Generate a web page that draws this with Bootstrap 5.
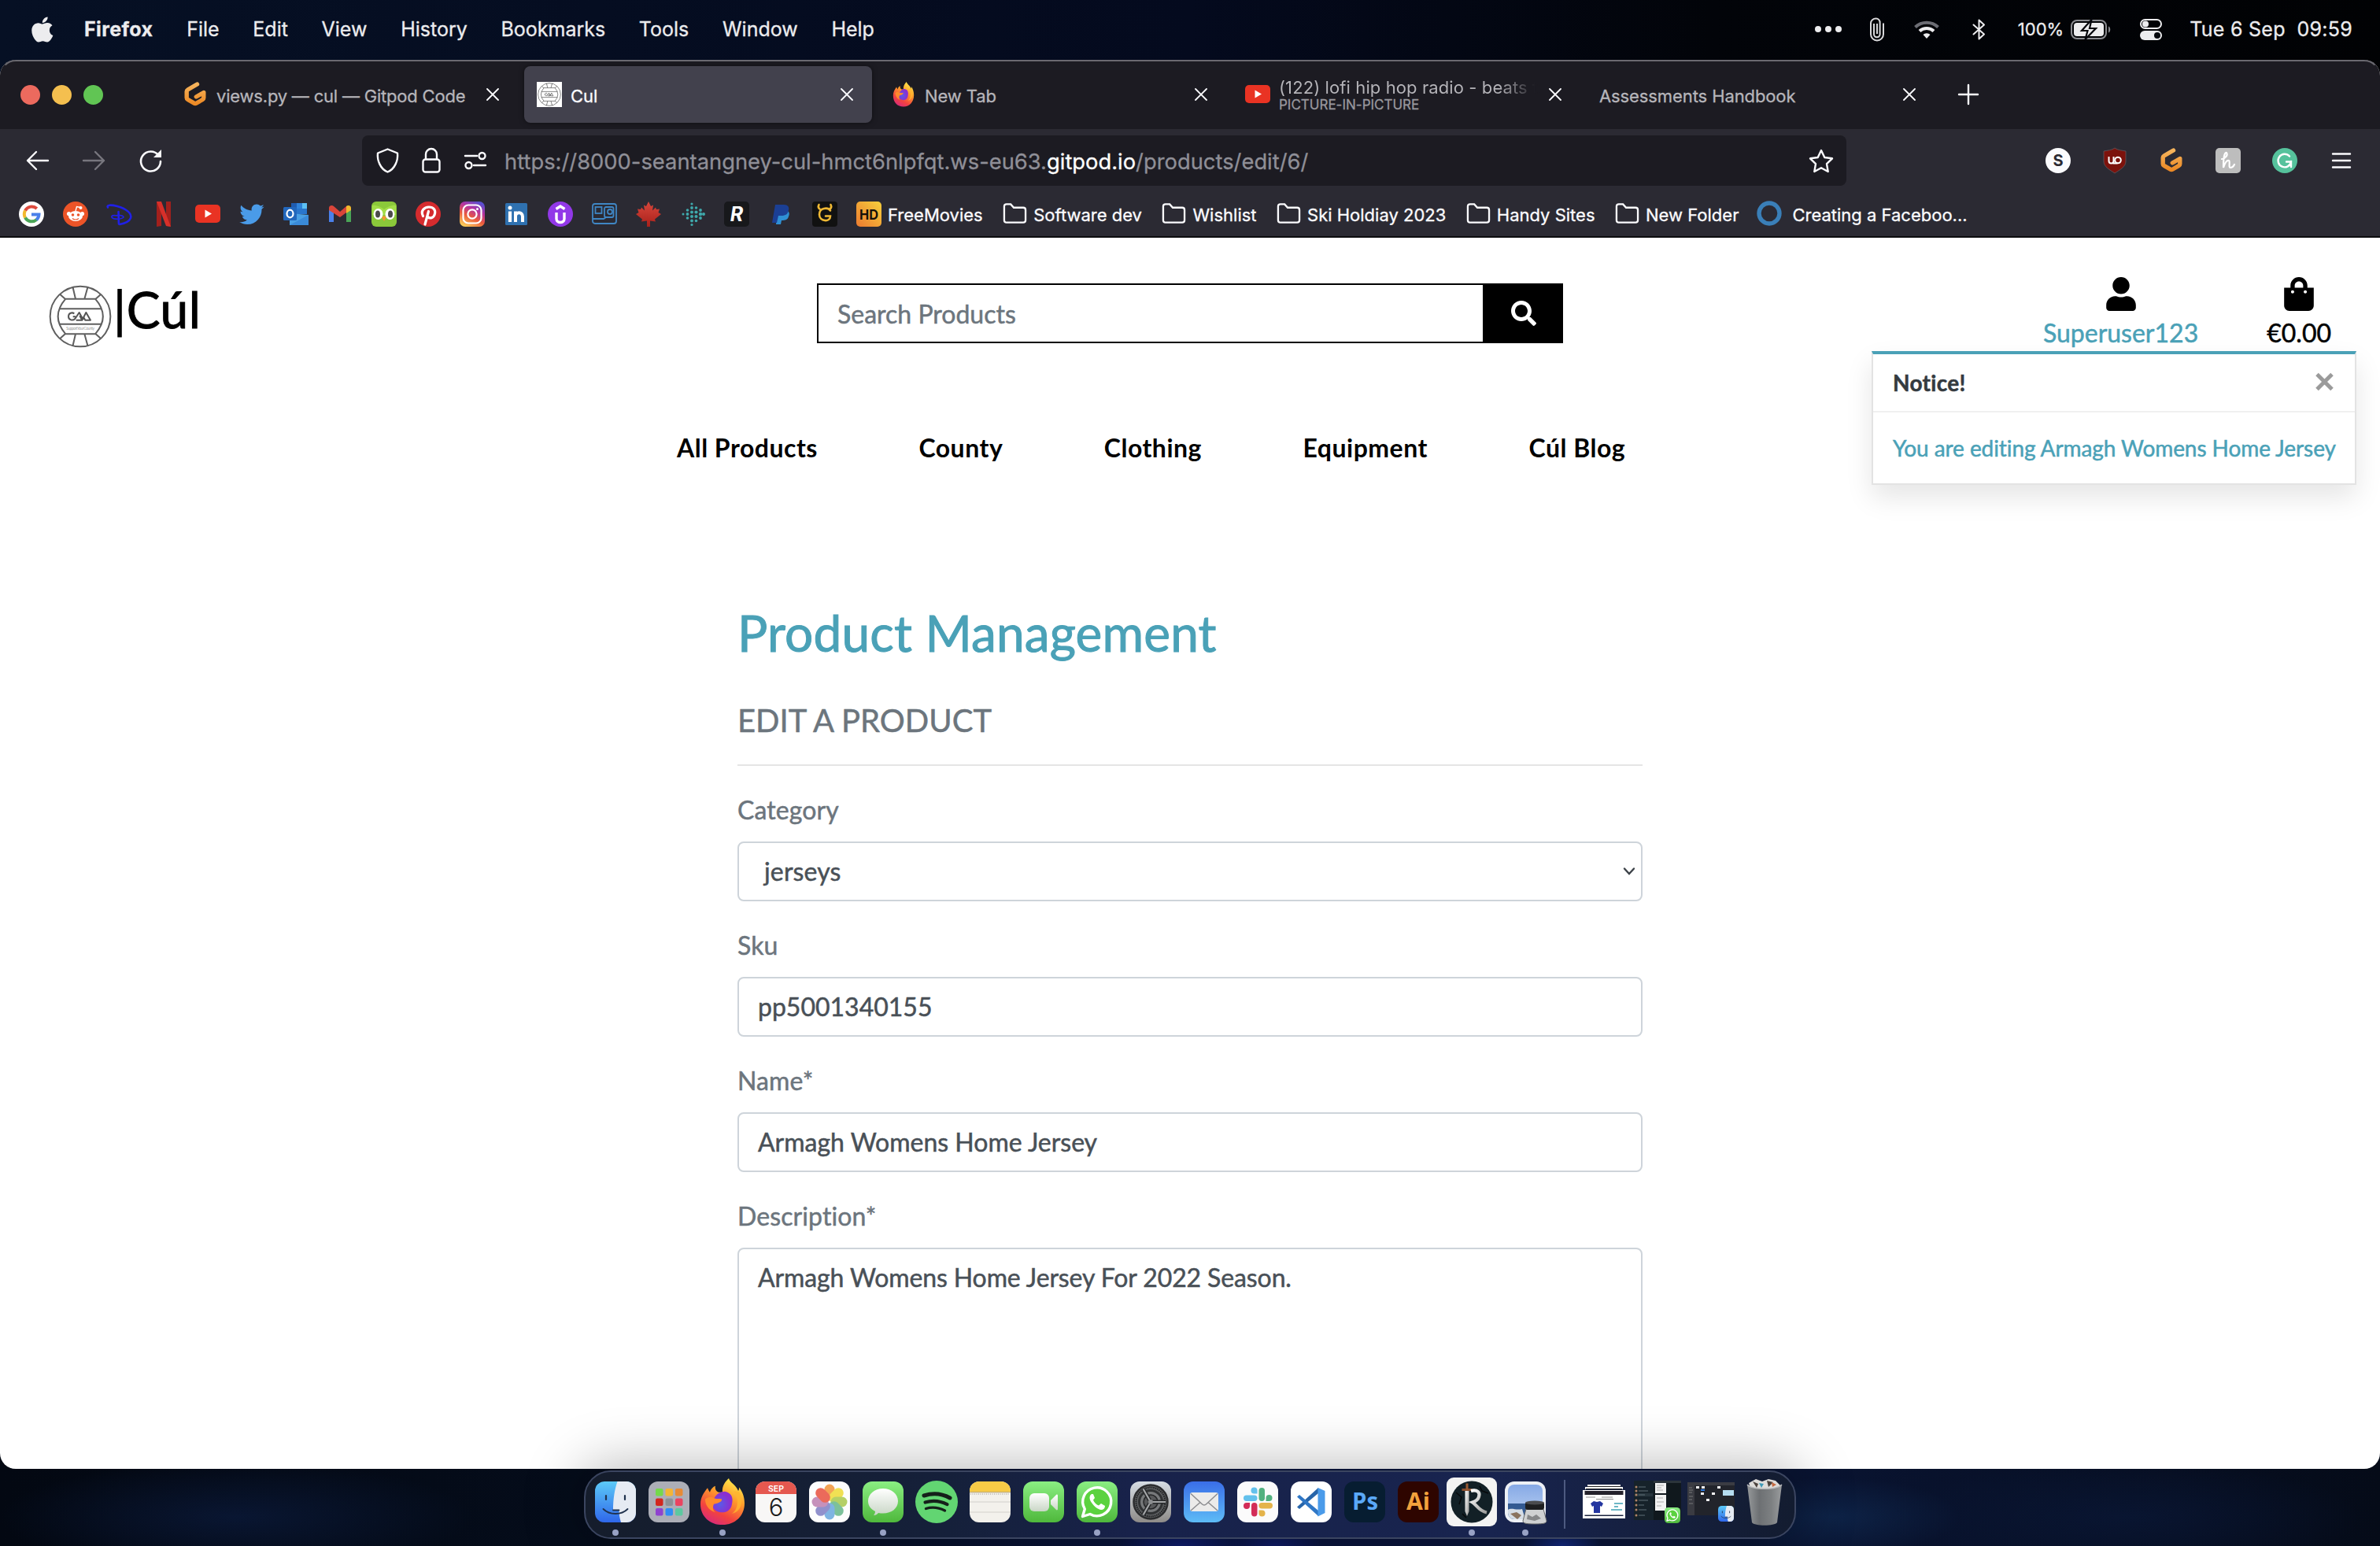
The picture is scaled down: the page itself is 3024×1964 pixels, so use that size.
<!DOCTYPE html>
<html lang="en">
<head>
<meta charset="utf-8">
<title>Cul</title>
<link href="https://cdn.jsdelivr.net/npm/bootstrap@5.3.0/dist/css/bootstrap.min.css" rel="stylesheet">
<style>
html{font-size:32px}
body{width:3024px;height:1964px;overflow:hidden;background:linear-gradient(90deg,#061024,#040a1e 50%,#020409 72%,#010204);font-family:Lato,sans-serif;font-size:32px;line-height:1.5;color:#495057;font-variant-ligatures:none}
svg{display:block;flex:none;overflow:visible}
.ui{font-family:Inter,sans-serif;line-height:1;white-space:nowrap;-webkit-text-stroke:.3px}
.page-text{-webkit-text-stroke:.5px}
/* menu bar */
.menubar{height:76px;padding:0 35px 2px 40px;color:#ececee;font-size:25px}
.menubar .apps{gap:42.700px;margin-left:40px}
.menubar .apps .fw-bold{letter-spacing:.4px}
.menubar .pct{font-size:22px;margin:0 9px 0 41px}
.menubar .clock{margin-left:35px;letter-spacing:.28px}
.g1{margin-left:35px}.g2{margin-left:37px}.g3{margin-left:42px}.g4{margin-left:36px}
/* browser window */
.win{height:1790px;border-radius:20px;overflow:hidden;background:#fff;position:relative;isolation:isolate}
.win::after{content:"";position:absolute;inset:0;border:2px solid transparent;border-top-color:#6a6970;border-radius:20px;pointer-events:none}
.tabs{height:88px;background:#1c1b22;padding:0 0 0 26px;color:#b6b5ba;font-size:22px;letter-spacing:-.1px}
.lights{gap:15px;width:190px;flex:none}
.lights i{width:25px;height:25px;border-radius:50%}
.l-red{background:#ec6a5e}.l-amber{background:#f4bf4f}.l-green{background:#61c554}
.ftab{width:442px;flex:none;height:72px;margin-right:8px;padding:0 24px 0 16px;border-radius:8px;gap:11px}
.ftab.on{background:#42414d;color:#fbfbfe;box-shadow:0 0 6px rgba(0,0,0,.5)}
.ftab .ttl{flex:1;min-width:0;line-height:30px;padding-top:3px}
.ftab .dashed{letter-spacing:-.2px}
.pip .ttl{line-height:23px;padding-top:2px;letter-spacing:.1px}
.pip .fadeout{display:block;background:linear-gradient(90deg,#b6b5ba 84%,#1c1b22 98%);-webkit-background-clip:text;color:transparent;-webkit-text-stroke:0}
.pip .sub{display:block;font-size:17px;line-height:20px;color:#98979d;letter-spacing:0}
.newtab{margin-left:22px}
.tools{height:80px;background:#2b2a33;padding:0 36px 8px 33px;color:#fbfbfe}
.tools .back{width:428px;gap:43px;margin-top:8px}
.url{width:1886px;flex:none;height:64px;background:#1c1b22;border-radius:8px;padding:0 16px 0 18px;font-size:27.350px;color:#8f8f97;margin-top:8px}
.url .addr{margin-left:23px;flex:1;padding-top:3px}
.url .lock{margin-left:29px}
.url .perms{margin-left:30px}
.tools .ext{gap:40px;margin-top:8px;padding-left:253px}
.tools .ext .burger{margin-left:3px}
.marks{height:58px;background:#2b2a33;border-bottom:2px solid #0c0c0e;padding:0 0 0 24px;color:#fbfbfe;font-size:22px}
.marks .ico{gap:24px}
.marks .lone{margin-left:8px;padding-top:2px}
.bmk{display:flex;align-items:center;gap:8px;margin-left:25.500px}
.bmk span{padding-top:2px}
.bmk svg{margin-top:-2px}
.bmk.site{gap:13px;margin-left:23px}
/* shop page */
.pagehead{display:grid;grid-template-columns:1fr 948px 1fr;height:144px;padding:0 62px 0 62px}
.pagehead .lg{padding-top:60px}
.pagehead .srch{padding-top:58px}
.brandtxt{font-size:64px;line-height:64px;color:#000;margin:-1px 0 0 2px;letter-spacing:.6px;-webkit-text-stroke:1px}
.srch .form-control{border:2px solid #000;border-radius:0;height:76px;color:#6c757d;padding-top:13px}
.srch .btn{width:100px;flex:none;border-radius:0;background:#000;height:76px;display:flex;align-items:center;justify-content:center;padding:0;border:0}
.tealtxt{color:#4aa1b7}
.tools-r{gap:87px;padding-top:50px}
.tools-r .lbl{line-height:48px;margin-top:4px}
.mainnav{gap:128.500px;padding:99px 0 0 860px;height:146px;color:#000;font-weight:700;white-space:nowrap;-webkit-text-stroke:0;letter-spacing:.5px}
.notice{position:absolute;left:2378px;top:370px;width:616px;height:170px;background:#fff;border:2px solid #e3e3e3;border-top:4px solid #4aa1b7;box-shadow:0 16px 32px rgba(0,0,0,.1);font-size:28px;z-index:3}
.notice .hd{height:74px;border-bottom:2px solid #f0f0f0;padding:0 26px 0 25px;color:#343a40;font-weight:700;letter-spacing:.3px}
.notice .hd svg{margin-top:-2px}
.notice .bd{padding:24px 0 0 25px;white-space:nowrap;letter-spacing:-.08px}
.pform{width:1150px;margin:174px 0 0 937px}
.pform h2{margin-bottom:48px;font-weight:400;letter-spacing:.12px;-webkit-text-stroke:1px}
.pform h5{margin:0 0 32px;font-weight:400;color:#6c757d}
.pform hr{margin:0 0 32px;border-top:2px solid #e5e5e5;opacity:1}
.pform label{display:block;color:#6c757d;margin-bottom:16px;letter-spacing:.1px}
.pform .form-control{border:2px solid #ced4da;border-radius:8px;height:76px;margin-bottom:32px;color:#495057}
.pform .pick{padding:12px 7px 12px 32px;letter-spacing:.15px}
.pform .ctl-area{height:500px;letter-spacing:-.11px}
/* dock */
.dock{position:absolute;left:742px;top:1868px;width:1540px;height:87px;border:2px solid #3b4560;border-radius:34px;background:linear-gradient(90deg,#151d2c,#15203a 30%,#18224a 45%,#18244f 75%,#131c30);padding:0 4px}
.dockshade{position:absolute;left:742px;top:1868px;width:1540px;height:87px;border-radius:34px;box-shadow:0 0 70px 8px rgba(0,0,0,.27)}
.dock .slot{width:68px;height:83px;display:flex;align-items:center;justify-content:center;position:relative}
.dock .slot svg{margin-top:-7px}
.dock .run::after{content:"";position:absolute;bottom:2px;left:30px;width:8px;height:8px;border-radius:50%;background:#98a2c4}
.dock .sep{width:32px;display:flex;justify-content:center}
.dock .sep i{width:2px;height:62px;background:#4d5a80;margin-top:10px}
.floor{position:absolute;left:0;top:1847px;width:3024px;height:117px;z-index:-1;background:radial-gradient(ellipse 80px 30px at 1500px 117px,#13249a88,transparent),radial-gradient(ellipse 60px 26px at 1620px 117px,#14229a77,transparent),radial-gradient(ellipse 50px 26px at 1985px 117px,#1a3ac088,transparent),radial-gradient(ellipse 160px 50px at 2330px 80px,#12305a88,transparent),radial-gradient(ellipse 300px 70px at 300px 80px,#0c1c40aa,transparent),radial-gradient(ellipse 300px 70px at 2700px 80px,#0a1838aa,transparent),linear-gradient(90deg,#030812,#050d1c 30%,#0a1540 50%,#0a1638 70%,#050b18)}
</style>
</head>
<body class="position-relative">
<svg width="0" height="0" class="position-absolute">
<defs>
<linearGradient id="ff" x1=".8" y1="0" x2=".3" y2="1"><stop offset="0" stop-color="#fff44f"/><stop offset=".4" stop-color="#ff9a2b"/><stop offset=".75" stop-color="#f2433f"/><stop offset="1" stop-color="#d92a7a"/></linearGradient>
<radialGradient id="ffp" cx=".4" cy=".6"><stop offset="0" stop-color="#5a5ae8"/><stop offset="1" stop-color="#8a2fd0"/></radialGradient>
<linearGradient id="gr" x1="0" y1="0" x2="0" y2="1"><stop offset="0" stop-color="#8aee82"/><stop offset="1" stop-color="#4fb83c"/></linearGradient>
<linearGradient id="gp" x1="0" y1="0" x2="0" y2="1"><stop offset="0" stop-color="#f6b45c"/><stop offset="1" stop-color="#ec8a26"/></linearGradient>
<linearGradient id="wg" x1="0" y1="0" x2="0" y2="1"><stop offset="0" stop-color="#fff"/><stop offset="1" stop-color="#c9d6c6"/></linearGradient>
<linearGradient id="ig" x1=".2" y1="1" x2=".7" y2="0"><stop offset="0" stop-color="#fbd35b"/><stop offset=".4" stop-color="#ea5a3c"/><stop offset=".7" stop-color="#b634a0"/><stop offset="1" stop-color="#5a4fd0"/></linearGradient>
<linearGradient id="fb" x1="0" y1="0" x2="0" y2="1"><stop offset="0" stop-color="#5ccaf8"/><stop offset="1" stop-color="#2f67ea"/></linearGradient>
<linearGradient id="ml" x1="0" y1="0" x2="0" y2="1"><stop offset="0" stop-color="#3a6ee8"/><stop offset="1" stop-color="#5ebcf6"/></linearGradient>
<linearGradient id="gs" x1="0" y1="0" x2="0" y2="1"><stop offset="0" stop-color="#d6dde4"/><stop offset="1" stop-color="#8e8b88"/></linearGradient>
<linearGradient id="tr" x1="0" y1="0" x2="1" y2="0"><stop offset="0" stop-color="#96999b"/><stop offset=".35" stop-color="#6d7073"/><stop offset=".7" stop-color="#7d8082"/><stop offset="1" stop-color="#9a9c9e"/></linearGradient>
<linearGradient id="hd" x1="0" y1="1" x2="1" y2="0"><stop offset="0" stop-color="#ec7a30"/><stop offset="1" stop-color="#f6d03c"/></linearGradient>
<linearGradient id="leaf" x1="0" y1="0" x2="0" y2="1"><stop offset="0" stop-color="#d8473c"/><stop offset="1" stop-color="#a8201a"/></linearGradient>
<linearGradient id="steel" x1="0" y1="0" x2="1" y2="1"><stop offset="0" stop-color="#fff"/><stop offset="1" stop-color="#9a9a98"/></linearGradient>
<linearGradient id="sky" x1="0" y1="0" x2="0" y2="1"><stop offset="0" stop-color="#86a9e6"/><stop offset="1" stop-color="#bcd2f2"/></linearGradient>
<symbol id="x" viewBox="0 0 16 16"><path d="M1 1L15 15M15 1L1 15" stroke="#fbfbfe" stroke-width="1.800" stroke-linecap="round"/></symbol>
<symbol id="folder" viewBox="0 0 32 28"><path d="M2 23V5a3 3 0 0 1 3-3h5.500l4 4.500H27a3 3 0 0 1 3 3V23a3 3 0 0 1-3 3H5a3 3 0 0 1-3-3z" fill="none" stroke="#fbfbfe" stroke-width="2.400"/></symbol>
<symbol id="gitpod" viewBox="0 0 32 32"><path d="M18.500 3L6.500 10a2.500 2.500 0 0 0-1.300 2.200v8a2.500 2.500 0 0 0 1.300 2.200l8.200 4.800a2.500 2.500 0 0 0 2.600 0l8.200-4.800a2.500 2.500 0 0 0 1.300-2.200v-6.700l-9.500 5.500" fill="none" stroke="url(#gp)" stroke-width="5.400" stroke-linecap="round" stroke-linejoin="round"/></symbol>
<symbol id="firefox" viewBox="0 0 56 68"><path d="M28 67C12 67 0 55 0 37 0 28 4 21 9 14c1 3 2 5 3 6 1-4 4-8 7-9-1 4 1 8 4 9h5C27 11 32 4 36 0c2 7 9 9 12 18 1-1 1-3 1-5 5 7 7 15 7 23 0 18-12 31-28 31z" fill="url(#ff)"/><path d="M42 19c7 8 7 25-2 32 12-3 15-18 10-30-2-3-5-2-8-2z" fill="#ffb52e" opacity=".8"/><path d="M17 30c3-8 9-11 14-11 8 2 11 8 9 18-1 9-8 13-14 12-8-1-12-8-11-14 4-1 8-1 12-5-4 1-7 1-10 0z" fill="url(#ffp)"/><path d="M6 30c4-4 8-4 12-1 3 1 6 0 9 1 1 3-4 6-10 7-2 6-1 9 2 12-9-3-13-11-13-19z" fill="#ff8a2c"/></symbol>
<symbol id="yt" viewBox="0 0 32 24"><rect width="32" height="23" rx="5" fill="#e93323"/><path d="M12.500 6.500L21 11.500l-8.500 5z" fill="#fff"/></symbol>
<symbol id="ball" viewBox="0 0 240 240"><g fill="none" stroke="#5f5f5f" stroke-width="6"><circle cx="120" cy="120" r="115"/><path d="M64 53H177M64 187H177M64 53Q6 120 64 187M177 53Q236 120 177 187M39 91H202M39 149H202M91 6L102 53M149 6L136 53M42 35L64 55M199 35L177 55M91 234L102 187M149 234L136 187M42 205L64 185M199 205L177 185"/></g><path d="M97 109c-8-6-22-2-22 11 0 15 17 17 25 9l16-24 15 28M92 121h10M104 134h23l-9-17M127 134l15-29 17 29h-20l-8-14" fill="none" stroke="#555" stroke-width="6" stroke-linejoin="round"/></symbol>
<symbol id="wa" viewBox="0 0 52 52"><rect width="52" height="52" rx="12" fill="url(#gr)"/><path d="M7.500 44.500l2.800-9.500A18 18 0 1 1 17 41.500z" fill="#5bd23f" stroke="#fff" stroke-width="3.400" stroke-linejoin="round"/><path d="M19 16c-3 2-3.500 6 0 11s8 8.500 12 9c3 0 5-2 5-5l-5-3-3 2.500c-3-1-6-4-7-7l2-2.500-2-5z" fill="#fff"/></symbol>
<symbol id="finder" viewBox="0 0 52 52"><rect width="52" height="52" rx="12" fill="url(#fb)"/><path d="M28.500 0H40a12 12 0 0 1 12 12v28a12 12 0 0 1-12 12h-7c-1.500-5-2.500-10-2.500-15.500h-7.500C23 22 25 10 28.500 0z" fill="#e6ebf3"/><path d="M14 18v5M38 18v5" stroke="#20324e" stroke-width="2.200" stroke-linecap="round"/><path d="M10.500 35c8 8 23 8 31 0M23 36.500h7.500" fill="none" stroke="#20324e" stroke-width="1.800" stroke-linecap="round"/></symbol>
</defs>
</svg>
<div class="floor"></div>

<div class="menubar ui d-flex align-items-center">
<svg width="27" height="33" viewBox="0 30 376 452"><path fill="#ececee" d="M318.700 268.700c-.2-36.700 16.400-64.400 50-84.800-18.800-26.900-47.200-41.700-84.700-44.600-35.500-2.800-74.300 20.700-88.500 20.700-15 0-49.400-19.700-76.400-19.700C63.300 141.200 4 184.800 4 273.500q0 39.300 14.400 81.200c12.800 36.700 59 126.700 107.200 125.200 25.200-.6 43-17.900 75.800-17.900 31.800 0 48.300 17.900 76.400 17.900 48.600-.7 90.400-82.500 102.600-119.300-65.200-30.700-61.700-90-61.700-91.900zm-56.600-164.200c27.300-32.400 24.800-61.900 24-72.500-24.100 1.400-52 16.400-67.900 34.900-17.500 19.800-27.800 44.300-25.600 71.900 26.100 2 49.900-11.400 69.500-34.300z"/></svg>
<div class="apps d-flex"><span class="fw-bold">Firefox</span><span>File</span><span>Edit</span><span>View</span><span>History</span><span>Bookmarks</span><span>Tools</span><span>Window</span><span>Help</span></div>
<div class="ms-auto d-flex align-items-center">
<svg width="34" height="8" viewBox="0 0 34 8"><g fill="#ececee"><circle cx="4" cy="4" r="4"/><circle cx="17" cy="4" r="4"/><circle cx="30" cy="4" r="4"/></g></svg>
<svg class="g1" width="20" height="32" viewBox="0 0 20 32"><path d="M6 9v13.500a3.800 3.800 0 0 0 7.600 0V8a5 5 0 0 0-5-5.500C5 2.500 2 5 2 8.500v14A8 8 0 0 0 10 30.500a8 8 0 0 0 8-8V8.500" fill="none" stroke="#d8d8da" stroke-width="2"/><path d="M10 9v13" stroke="#ececee" stroke-width="1.800"/></svg>
<svg class="g2" width="32" height="24" viewBox="0 0 32 24"><g fill="none"><path d="M1.500 9.500a21 21 0 0 1 29 0" stroke="#6c6d74" stroke-width="4"/><path d="M7 14.500a13 13 0 0 1 18 0" stroke="#ececee" stroke-width="4"/></g><path d="M16 24l-4.500-5a6.500 6.500 0 0 1 9 0z" fill="#ececee"/></svg>
<svg class="g3" width="17" height="27" viewBox="0 0 17 27"><path d="M1.500 7.500L15 19.500 8.500 25.500V1.500L15 7.500 1.500 19.500" fill="none" stroke="#ececee" stroke-width="2" stroke-linejoin="round" stroke-linecap="round"/></svg>
<span class="pct">100%</span>
<svg width="52" height="25" viewBox="0 0 52 25"><rect x="1" y="1" width="44" height="23" rx="7" fill="none" stroke="#8a8b90" stroke-width="2"/><rect x="4" y="4" width="38" height="17" rx="4" fill="#ececee"/><path d="M48 8.500c3 1 3 7 0 8z" fill="#8a8b90"/><path d="M26.500 0L14 14h7.500L18.500 25 32 11h-8z" fill="#ececee" stroke="#05070c" stroke-width="2.200"/></svg>
<svg class="g4" width="28" height="27" viewBox="0 0 28 27"><rect x="1" y="1" width="26" height="11" rx="5.500" fill="none" stroke="#ececee" stroke-width="2"/><circle cx="7" cy="6.500" r="4" fill="#ececee"/><rect y="15" width="28" height="12" rx="6" fill="#ececee"/><circle cx="22" cy="21" r="4" fill="#05070c"/></svg>
<span class="clock">Tue 6 Sep&nbsp; 09:59</span>
</div>
</div>

<div class="win">
<div class="tabs ui d-flex align-items-center">
<div class="lights d-flex"><i class="l-red"></i><i class="l-amber"></i><i class="l-green"></i></div>
<div class="ftab d-flex align-items-center"><svg width="32" height="32"><use href="#gitpod"/></svg><span class="ttl dashed">views.py — cul — Gitpod Code</span><svg width="16" height="16"><use href="#x"/></svg></div>
<div class="ftab on d-flex align-items-center"><svg width="32" height="32"><rect width="32" height="32" fill="#fff"/><use href="#ball" x="1" y="1" width="30" height="30"/></svg><span class="ttl">Cul</span><svg width="16" height="16"><use href="#x"/></svg></div>
<div class="ftab d-flex align-items-center"><svg width="32" height="32"><use href="#firefox"/></svg><span class="ttl">New Tab</span><svg width="16" height="16"><use href="#x"/></svg></div>
<div class="ftab pip d-flex align-items-center"><svg width="32" height="24"><use href="#yt"/></svg><span class="ttl"><span class="fadeout">(122) lofi hip hop radio - beats to</span><span class="sub">PICTURE-IN-PICTURE</span></span><svg width="16" height="16"><use href="#x"/></svg></div>
<div class="ftab d-flex align-items-center"><span class="ttl">Assessments Handbook</span><svg width="16" height="16"><use href="#x"/></svg></div>
<svg class="newtab" width="26" height="26" viewBox="0 0 26 26"><path d="M13 1v24M1 13h24" stroke="#fbfbfe" stroke-width="2.400" stroke-linecap="round"/></svg>
</div>

<div class="tools ui d-flex align-items-center">
<div class="back d-flex align-items-center">
<svg width="29" height="26" viewBox="0 0 29 26"><path d="M28 13H2M13 2L2 13l11 11" fill="none" stroke="#fbfbfe" stroke-width="2.400" stroke-linecap="round" stroke-linejoin="round"/></svg>
<svg width="29" height="26" viewBox="0 0 29 26"><path d="M1 13h26M16 2l11 11-11 11" fill="none" stroke="#77767e" stroke-width="2.400" stroke-linecap="round" stroke-linejoin="round"/></svg>
<svg width="29" height="28" viewBox="0 0 29 28"><path d="M24.500 7.500A12.500 12.500 0 1 0 27 15" fill="none" stroke="#fbfbfe" stroke-width="2.600" stroke-linecap="round"/><path d="M28 0v10H18z" fill="#fbfbfe"/></svg>
</div>
<div class="url d-flex align-items-center">
<svg width="29" height="32" viewBox="0 0 29 32"><path d="M14.500 1.500L27 6.500c1 9-3 20-12.500 24C5 26.500 1 15.500 2 6.500z" fill="none" stroke="#fbfbfe" stroke-width="2.400" stroke-linejoin="round"/></svg>
<svg class="lock" width="24" height="32" viewBox="0 0 24 32"><path d="M5 14V8a7 7 0 0 1 14 0v6" fill="none" stroke="#fbfbfe" stroke-width="2.400"/><rect x="1.500" y="14.500" width="21" height="16" rx="3" fill="none" stroke="#fbfbfe" stroke-width="2.400"/></svg>
<svg class="perms" width="28" height="22" viewBox="0 0 28 22"><g fill="none" stroke="#fbfbfe" stroke-width="2.400" stroke-linecap="round"><path d="M1 5h15M12 17h15"/><circle cx="22.500" cy="5" r="4"/><circle cx="5.500" cy="17" r="4"/></g></svg>
<span class="addr">https://8000-seantangney-cul-hmct6nlpfqt.ws-eu63.<span class="text-white">gitpod.io</span>/products/edit/6/</span>
<svg width="32" height="31" viewBox="0 0 32 31"><path d="M16 2l4.300 9 9.700 1.300-7 6.900 1.700 9.800L16 24.300 7.300 29 9 19.200l-7-6.900L11.700 11z" fill="none" stroke="#fbfbfe" stroke-width="2.400" stroke-linejoin="round"/></svg>
</div>
<div class="ext d-flex align-items-center">
<svg width="32" height="32" viewBox="0 0 32 32"><circle cx="16" cy="16" r="16" fill="#fbfbfe"/><text x="16" y="23" text-anchor="middle" font-size="20" font-weight="700" fill="#2b2a33">S</text></svg>
<svg width="32" height="32" viewBox="0 0 32 32"><path d="M16 0c4 3 9 3 14 4v13c0 7-8 11-14 15C10 28 2 24 2 17V4c5-1 10-1 14-4z" fill="#7c120c" stroke="#5d5960" stroke-width=".8"/><path d="M8.500 11v5.500a3 3 0 0 0 6 0V11M14.500 16v3.500h5" fill="none" stroke="#fff" stroke-width="2"/><circle cx="20" cy="15.500" r="3.800" fill="none" stroke="#fff" stroke-width="2"/></svg>
<svg width="32" height="32"><use href="#gitpod"/></svg>
<svg width="32" height="32" viewBox="0 0 32 32"><rect width="32" height="32" rx="5" fill="#bdbdbd"/><path d="M8 14c5-1 8-5 6-8-3-1-4 8-4 19 2-6 4-10 7-9 2 1-1 9 2 9 2 0 4-2 5-4" fill="none" stroke="#fff" stroke-width="2.200" stroke-linecap="round"/></svg>
<svg width="32" height="32" viewBox="0 0 32 32"><circle cx="16" cy="16" r="16" fill="#56c29c"/><path d="M22 10.500a8.300 8.300 0 1 0 2 7h-6M24 17v7" fill="none" stroke="#fff" stroke-width="2.400" stroke-linecap="round"/></svg>
<svg class="burger" width="26" height="20" viewBox="0 0 26 20"><path d="M2 1.500h22M2 10h22M2 18.500h22" stroke="#fbfbfe" stroke-width="2.400" stroke-linecap="round"/></svg>
</div>
</div>

<div class="marks ui d-flex align-items-center">
<div class="ico d-flex align-items-center">
<svg width="32" height="32" viewBox="0 0 32 32"><circle cx="16" cy="16" r="16" fill="#fff"/><g fill="none" stroke-width="4"><path d="M8 11.500A9.500 9.500 0 0 1 22.800 9" stroke="#dd4b3e"/><path d="M8 11.500a9.500 9.500 0 0 0 0 9" stroke="#f2b92e"/><path d="M8 20.500a9.500 9.500 0 0 0 14.500 2.500" stroke="#4aa557"/><path d="M22.300 23.200A9.500 9.500 0 0 0 25.500 16.500H16" stroke="#4a80ea"/></g></svg>
<svg width="32" height="32" viewBox="0 0 32 32"><circle cx="16" cy="16" r="16" fill="#ec5428"/><path d="M16 12l1.500-5.500 4.500 1" stroke="#fff" fill="none" stroke-width="1.400"/><circle cx="22.500" cy="8" r="2" fill="#fff"/><circle cx="7.500" cy="15.500" r="2.600" fill="#fff"/><circle cx="24.500" cy="15.500" r="2.600" fill="#fff"/><ellipse cx="16" cy="18.500" rx="9" ry="6.500" fill="#fff"/><circle cx="12.500" cy="17" r="1.800" fill="#ec5428"/><circle cx="19.500" cy="17" r="1.800" fill="#ec5428"/><path d="M12 21.500c2 2 6 2 8 0" stroke="#ec5428" fill="none" stroke-width="1.200"/></svg>
<svg width="32" height="32" viewBox="0 0 32 32"><g fill="none" stroke="#2020e8" stroke-linecap="round"><path d="M1 7.500C-1 4 5 4 13 6c11 3 19 9 17 15-2 5-8 7-14 8" stroke-width="2.600"/><path d="M14.500 13c.5 5 0 11 .5 15.500" stroke-width="2.600"/><path d="M13 18c-5-1-8 0-7 2 2 3 12 3 15 0 0-2-5-3-8-2.500" stroke-width="1.600"/></g></svg>
<svg width="32" height="32" viewBox="0 0 32 32"><path d="M7 0h6v31l-6 1zM19 0h6v32l-6-1z" fill="#a3201c"/><path d="M7 0h6l12 32-6-1z" fill="#d8302a"/></svg>
<svg width="32" height="24"><use href="#yt"/></svg>
<svg width="32" height="27" viewBox="0 40 512 440"><path fill="#4a9be8" d="M459.370 151.716c.325 4.548.325 9.097.325 13.645 0 138.720-105.583 298.558-298.558 298.558-59.452 0-114.680-17.219-161.137-47.106 8.447.974 16.568 1.299 25.340 1.299 49.055 0 94.213-16.568 130.274-44.832-46.132-.975-84.792-31.188-98.112-72.772 6.498.974 12.995 1.624 19.818 1.624 9.421 0 18.843-1.300 27.614-3.573-48.081-9.747-84.143-51.980-84.143-102.985v-1.299c13.969 7.797 30.214 12.670 47.431 13.319-28.264-18.843-46.781-51.005-46.781-87.391 0-19.492 5.197-37.360 14.294-52.954 51.655 63.675 129.300 105.258 216.365 109.807-1.624-7.797-2.599-15.918-2.599-24.040 0-57.828 46.782-104.934 104.934-104.934 30.213 0 57.502 12.670 76.670 33.137 23.715-4.548 46.456-13.320 66.599-25.340-7.798 24.366-24.366 44.833-46.132 57.827 21.117-2.273 41.584-8.122 60.426-16.243-14.292 20.791-32.161 39.308-52.628 54.253z"/></svg>
<svg width="32" height="32" viewBox="0 0 32 32"><path d="M10 2h20v14H10z" fill="#1f5cb0"/><path d="M17 2h7v7h-7z" fill="#2f82d8"/><path d="M24 2h6v7h-6z" fill="#5cc0f4"/><path d="M17 9h13v7H17z" fill="#2a76cc"/><path d="M8 15l24 2v13H8z" fill="#4aa0e4"/><path d="M8 30l24-13v13z" fill="#3a8ad8"/><rect y="7" width="17" height="17" rx="1.500" fill="#2267bc"/><ellipse cx="8.500" cy="15.500" rx="4" ry="4.800" fill="none" stroke="#fff" stroke-width="2.200"/></svg>
<svg width="32" height="32" viewBox="0 0 32 32"><path d="M2 8v18h6V12z" fill="#4a80ea"/><path d="M30 8v18h-6V12z" fill="#4aa557"/><path d="M2 8c0-3 4-4 6-2l8 7v7L2 11z" fill="#d9453a"/><path d="M16 13l8-7v8l-8 6z" fill="#d9453a"/><path d="M24 6c2-2 6-1 6 2v3l-6 4z" fill="#f2b92e"/></svg>
<svg width="32" height="32" viewBox="0 0 32 32"><rect width="32" height="32" rx="6" fill="#8bc83a"/><path d="M1 5c4-1 11 2 15 5 4-3 11-6 15-5v12H1z" fill="#a2dc48"/><ellipse cx="8.500" cy="16" rx="6" ry="7" fill="#fff"/><ellipse cx="23.500" cy="16" rx="6" ry="7" fill="#fff"/><ellipse cx="8" cy="16" rx="3" ry="4.500" fill="#4b4b4b"/><ellipse cx="24" cy="16" rx="3" ry="4.500" fill="#4b4b4b"/><path d="M13 20l3-2 3 2-3 5z" fill="#f39a32"/></svg>
<svg width="32" height="32" viewBox="0 0 32 32"><circle cx="16" cy="16" r="16" fill="#d52b2e"/><path d="M9.500 18.500C6 12 11 7 17 7c6 0 8.500 4 7.500 8.500-1 5-6 7-9 4M16.500 12.500L12 29" fill="none" stroke="#fff" stroke-width="3.200" stroke-linecap="round"/></svg>
<svg width="32" height="32" viewBox="0 0 32 32"><rect width="32" height="32" rx="7" fill="url(#ig)"/><g fill="none" stroke="#fff" stroke-width="2.200"><rect x="4.500" y="4.500" width="23" height="23" rx="6.500"/><circle cx="16" cy="16" r="5.600"/></g><circle cx="22.500" cy="9.500" r="1.500" fill="#fff"/></svg>
<svg width="32" height="32" viewBox="0 0 32 32"><rect x="2" y="2" width="28" height="28" rx="1.500" fill="#2f71b0"/><circle cx="8" cy="8" r="2.500" fill="#fff"/><path d="M8 12.500V26" stroke="#fff" stroke-width="4.200"/><path d="M15 12.500V26M15 19c0-6 9-6.500 9 0v7" fill="none" stroke="#fff" stroke-width="4"/></svg>
<svg width="32" height="32" viewBox="0 0 32 32"><circle cx="16" cy="16" r="16" fill="#9238e8"/><path d="M11 14v8c0 6 10 6 10 0v-8M10.500 9.500L16 6l5.500 3.500" fill="none" stroke="#fff" stroke-width="3.400"/></svg>
<svg width="32" height="32" viewBox="0 0 32 32"><g fill="none" stroke="#3f86c4" stroke-width="1.800"><rect x="1" y="3" width="30" height="25" rx="3"/><rect x="4.500" y="7" width="8" height="8"/><rect x="16" y="7" width="11.500" height="13" rx="2"/><circle cx="23" cy="13" r="3"/><path d="M1 22h14l3-2"/></g></svg>
<svg width="32" height="32" viewBox="0 0 32 32"><path d="M16 0l3 6 3-1.500-1 7 4-4 1 2.500 4-.5-1.500 4.500 3.500 2-8 6.500 1 3-7-1v7.500h-4V24.500l-7 1 1-3L0 16l3.500-2L2 9.500l4 .5 1-2.500 4 4-1-7L13 6z" fill="url(#leaf)"/></svg>
<svg width="32" height="32" viewBox="0 0 32 32"><g fill="#3fa9ac"><circle cx="15" cy="3" r="1.600"/><circle cx="15" cy="8" r="1.900"/><circle cx="15" cy="13.500" r="2"/><circle cx="15" cy="19" r="2"/><circle cx="15" cy="24.500" r="1.900"/><circle cx="15" cy="29.500" r="1.600"/><circle cx="9.500" cy="11" r="1.800"/><circle cx="9.500" cy="16" r="1.900"/><circle cx="9.500" cy="21" r="1.800"/><circle cx="20.500" cy="8" r="1.800"/><circle cx="20.500" cy="13.500" r="2.100"/><circle cx="20.500" cy="19" r="2.100"/><circle cx="20.500" cy="24.500" r="1.800"/><circle cx="26" cy="11" r="1.900"/><circle cx="26" cy="16" r="2.200"/><circle cx="26" cy="21" r="1.900"/><circle cx="30" cy="16" r="2"/><circle cx="4" cy="16" r="1.500"/></g></svg>
<svg width="32" height="32" viewBox="0 0 32 32"><rect width="32" height="32" rx="5" fill="#17181b"/><text x="16" y="25" text-anchor="middle" font-family="Inter" font-style="italic" font-weight="700" font-size="25" fill="#fff">R</text></svg>
<svg width="32" height="32" viewBox="0 0 32 32"><path d="M11 11h9c6 0 8 3 6 8-1 4-4 5-9 5l-1 5h-6z" fill="#2f90d4"/><path d="M9 4h11c5 0 7 3 6 7-1 5-4 7-9 7h-4l-2 9H5z" fill="#1b3f94"/></svg>
<svg width="32" height="32" viewBox="0 0 32 32"><rect width="32" height="32" rx="4" fill="#111"/><path d="M23 11.500c-3-4.500-14-4-14 5s14 10.500 14 2h-6M9.500 9.500c-2-1.500-2-3.500-1-5.500M22.500 9.500c2-1.500 2-3.500 1-5.500" fill="none" stroke="#efb834" stroke-width="2.600" stroke-linecap="round"/></svg>
<svg width="32" height="32" viewBox="0 0 32 32"><rect width="32" height="32" rx="5" fill="url(#hd)"/><text x="16" y="22.500" text-anchor="middle" font-size="18" font-weight="700" textLength="24" lengthAdjust="spacingAndGlyphs" fill="#15100a">HD</text></svg>
</div>
<span class="lone">FreeMovies</span>
<div class="bmk"><svg width="31" height="28"><use href="#folder"/></svg><span>Software dev</span></div>
<div class="bmk"><svg width="31" height="28"><use href="#folder"/></svg><span>Wishlist</span></div>
<div class="bmk"><svg width="31" height="28"><use href="#folder"/></svg><span>Ski Holdiay 2023</span></div>
<div class="bmk"><svg width="31" height="28"><use href="#folder"/></svg><span>Handy Sites</span></div>
<div class="bmk"><svg width="31" height="28"><use href="#folder"/></svg><span>New Folder</span></div>
<div class="bmk site"><svg width="32" height="32" viewBox="0 0 32 32"><circle cx="16" cy="16" r="13" fill="none" stroke="#3a7fb8" stroke-width="5.400"/></svg><span>Creating a Faceboo...</span></div>
</div>

<div class="page-text">
<div class="pagehead">
<div class="lg d-flex align-items-start"><svg width="80" height="80" viewBox="0 0 80 80"><use href="#ball"/><text x="40" y="57" text-anchor="middle" font-family="Lato" font-size="5.500" fill="#a5a5a5" stroke="none" textLength="36">Support Your County</text></svg><span class="brandtxt">|Cúl</span></div>
<div class="srch d-flex align-items-start"><div class="form-control">Search Products</div><div class="btn"><svg width="32" height="32" viewBox="0 0 512 512"><path fill="#fff" d="M505 442.700L405.300 343c-4.500-4.500-10.600-7-17-7H372c27.600-35.300 44-79.700 44-128C416 93.100 322.900 0 208 0S0 93.100 0 208s93.100 208 208 208c48.300 0 92.700-16.400 128-44v16.300c0 6.400 2.500 12.500 7 17l99.700 99.700c9.400 9.400 24.600 9.400 33.900 0l28.300-28.300c9.400-9.400 9.400-24.600.1-34zM208 336c-70.700 0-128-57.200-128-128 0-70.700 57.200-128 128-128 70.700 0 128 57.200 128 128 0 70.700-57.200 128-128 128z"/></svg></div></div>
<div class="tools-r d-flex justify-content-end align-items-start">
<div class="d-flex flex-column align-items-center tealtxt"><svg width="38" height="43" viewBox="0 0 448 512"><path d="M224 256c70.700 0 128-57.300 128-128S294.700 0 224 0 96 57.300 96 128s57.300 128 128 128zm89.600 32h-16.700c-22.200 10.200-46.900 16-72.900 16s-50.600-5.800-72.900-16h-16.700C60.200 288 0 348.200 0 422.400V464c0 26.500 21.500 48 48 48h352c26.500 0 48-21.500 48-48v-41.600c0-74.200-60.200-134.400-134.400-134.400z"/></svg><span class="lbl">Superuser123</span></div>
<div class="d-flex flex-column align-items-center text-black"><svg width="38" height="43" viewBox="0 0 448 512"><path d="M352 160v-32C352 57.420 294.579 0 224 0 153.420 0 96 57.420 96 128v32H0v272c0 44.183 35.817 80 80 80h288c44.183 0 80-35.817 80-80V160h-96zm-192-32c0-35.290 28.710-64 64-64s64 28.710 64 64v32H160v-32zm160 120c-13.255 0-24-10.745-24-24s10.745-24 24-24 24 10.745 24 24-10.745 24-24 24zm-192 0c-13.255 0-24-10.745-24-24s10.745-24 24-24 24 10.745 24 24-10.745 24-24 24z"/></svg><span class="lbl">€0.00</span></div>
</div>
</div>
<div class="mainnav d-flex"><span>All Products</span><span>County</span><span>Clothing</span><span>Equipment</span><span>Cúl Blog</span></div>
<div class="notice"><div class="hd d-flex align-items-center justify-content-between"><span>Notice!</span><svg width="25" height="24" viewBox="0 0 25 24"><path d="M3 2.500L22 21.500M22 2.500L3 21.500" stroke="#9a9a9a" stroke-width="5"/></svg></div><div class="bd tealtxt">You are editing Armagh Womens Home Jersey</div></div>
<div class="pform">
<h2 class="tealtxt">Product Management</h2>
<h5>EDIT A PRODUCT</h5>
<hr>
<label>Category</label>
<div class="form-control pick d-flex align-items-center justify-content-between"><span>jerseys</span><svg width="16" height="10" viewBox="0 0 16 10"><path d="M2 1.500L8 8l6-6.500" fill="none" stroke="#3c4248" stroke-width="2.400" stroke-linecap="round"/></svg></div>
<label>Sku</label>
<div class="form-control">pp5001340155</div>
<label>Name*</label>
<div class="form-control">Armagh Womens Home Jersey</div>
<label>Description*</label>
<div class="form-control ctl-area">Armagh Womens Home Jersey For 2022 Season.</div>
</div>
</div>
</div>

<div class="dockshade"></div>
<div class="dock d-flex">
<div class="slot run"><svg width="52" height="52"><use href="#finder"/></svg></div>
<div class="slot"><svg width="52" height="52" viewBox="0 0 52 52"><rect width="52" height="52" rx="12" fill="#acaeb7"/><rect x="9" y="9" width="9.500" height="9.500" rx="2" fill="#74d94c"/><rect x="21.500" y="9" width="9.500" height="9.500" rx="2" fill="#f3b536"/><rect x="34" y="9" width="9.500" height="9.500" rx="2" fill="#e78a36"/><rect x="9" y="21.500" width="9.500" height="9.500" rx="2" fill="#d2271e"/><rect x="21.500" y="21.500" width="9.500" height="9.500" rx="2" fill="#8d9196"/><rect x="34" y="21.500" width="9.500" height="9.500" rx="2" fill="#ea4460"/><rect x="9" y="34" width="9.500" height="9.500" rx="2" fill="#8f43cf"/><rect x="21.500" y="34" width="9.500" height="9.500" rx="2" fill="#2f8df4"/><rect x="34" y="34" width="9.500" height="9.500" rx="2" fill="#5cc8a0"/></svg></div>
<div class="slot run"><svg width="56" height="60" viewBox="0 0 56 68" preserveAspectRatio="none"><use href="#firefox" width="56" height="68"/></svg></div>
<div class="slot"><svg width="52" height="52" viewBox="0 0 52 52"><rect width="52" height="52" rx="12" fill="#f8f7f6"/><path d="M0 16v-4A12 12 0 0 1 12 0h28a12 12 0 0 1 12 12v4z" fill="#e5584f"/><text x="26" y="12.500" text-anchor="middle" font-family="Inter" font-size="10.500" font-weight="600" fill="#fff">SEP</text><text x="26" y="44" text-anchor="middle" font-family="Inter" font-size="31" font-weight="300" fill="#1c1c1c">6</text></svg></div>
<div class="slot"><svg width="52" height="52" viewBox="-26 -26 52 52"><rect x="-26" y="-26" width="52" height="52" rx="12" fill="#fdfdfd"/><g opacity=".85"><rect x="-6.500" y="-22.500" width="13" height="21" rx="6.500" fill="#f2953a"/><rect x="-6.500" y="-22.500" width="13" height="21" rx="6.500" fill="#eedb37" transform="rotate(45)"/><rect x="-6.500" y="-22.500" width="13" height="21" rx="6.500" fill="#a9c94c" transform="rotate(90)"/><rect x="-6.500" y="-22.500" width="13" height="21" rx="6.500" fill="#67b789" transform="rotate(135)"/><rect x="-6.500" y="-22.500" width="13" height="21" rx="6.500" fill="#6aa8de" transform="rotate(180)"/><rect x="-6.500" y="-22.500" width="13" height="21" rx="6.500" fill="#7f7fc4" transform="rotate(225)"/><rect x="-6.500" y="-22.500" width="13" height="21" rx="6.500" fill="#bd7fb0" transform="rotate(270)"/><rect x="-6.500" y="-22.500" width="13" height="21" rx="6.500" fill="#e8513f" transform="rotate(315)"/></g></svg></div>
<div class="slot run"><svg width="52" height="52" viewBox="0 0 52 52"><rect width="52" height="52" rx="12" fill="url(#gr)"/><path d="M26 9c11 0 19 7 19 16s-8 15.500-19 15.500c-2 0-4 0-6-.6-1 1.500-3 2.800-6 3 1.500-1.500 2-3 2-4.900C10 35 7 30.500 7 25 7 16 15 9 26 9z" fill="url(#wg)"/></svg></div>
<div class="slot"><svg width="54" height="54" viewBox="0 0 54 54"><circle cx="27" cy="27" r="27" fill="#62d572"/><g fill="none" stroke="#15201a" stroke-linecap="round"><path d="M11 19c11-3.500 23-2.500 33 3" stroke-width="5"/><path d="M12.500 27.500c10-3 19-2 28 2.600" stroke-width="4.200"/><path d="M13.500 35.500c8-2.500 16-1.500 24 2.500" stroke-width="3.400"/></g></svg></div>
<div class="slot"><svg width="52" height="52" viewBox="0 0 52 52"><rect width="52" height="52" rx="12" fill="#f3f1ec"/><path d="M0 13v-1A12 12 0 0 1 12 0h28a12 12 0 0 1 12 12v1z" fill="#f8cb46"/><path d="M0 13.700h52" stroke="#b59a58" stroke-width="1"/><path d="M1 16h50" stroke="#b5b3ae" stroke-width="1.500" stroke-dasharray="1 1.500"/><path d="M0 26h52M0 39h52" stroke="#d2d0cb"/></svg></div>
<div class="slot"><svg width="52" height="52" viewBox="0 0 52 52"><rect width="52" height="52" rx="12" fill="url(#gr)"/><rect x="8" y="15" width="25" height="23" rx="6" fill="url(#wg)"/><path d="M35 24l7-7c1-1 2 0 2 1v17c0 1-1 2-2 1l-7-7z" fill="url(#wg)"/></svg></div>
<div class="slot run"><svg width="52" height="52"><use href="#wa"/></svg></div>
<div class="slot"><svg width="52" height="52" viewBox="-26 -26 52 52"><rect x="-26" y="-26" width="52" height="52" rx="12" fill="url(#gs)"/><circle r="21.500" fill="#5b5d5f" stroke="#2b2c2e" stroke-width="2.500"/><circle r="18.500" fill="none" stroke="#1f2022" stroke-width="2" stroke-dasharray="1.500 1"/><circle r="14.500" fill="#77797b" stroke="#303234" stroke-width="3"/><circle r="9" fill="#58595b" stroke="#252628" stroke-width="1.500"/><path d="M0 0h19M0 0L-9.500-16.500M0 0L-9.500 16.500" stroke="#26282a" stroke-width="5"/><path d="M0 0h19M0 0L-9.500-16.500M0 0L-9.500 16.500" stroke="#a3a5a7" stroke-width="2.200"/><circle r="3" fill="#8b8d8f"/></svg></div>
<div class="slot"><svg width="52" height="52" viewBox="0 0 52 52"><rect width="52" height="52" rx="12" fill="url(#ml)"/><rect x="8" y="14" width="36" height="24" rx="3" fill="#ecebea"/><path d="M9 15.500l14 13c2 2 4 2 6 0l14-13M9 37l12-10.500M43 37L31 26.500" fill="none" stroke="#8d8d90" stroke-width="1.500"/></svg></div>
<div class="slot"><svg width="52" height="52" viewBox="0 0 52 52"><rect width="52" height="52" rx="12" fill="#fbfbfb"/><rect x="8" y="17.500" width="17.500" height="7.500" rx="3.700" fill="#63c1ec"/><path d="M25.500 15.500h-4a4 4 0 1 1 4-4z" fill="#63c1ec"/><rect x="27.500" y="8" width="7.500" height="17" rx="3.700" fill="#52b17f"/><path d="M36.500 25v-4a4 4 0 1 1 4 4z" fill="#52b17f"/><rect x="27.500" y="27" width="17.500" height="7.500" rx="3.700" fill="#e4b34a"/><path d="M27.500 36.500h4a4 4 0 1 1-4 4z" fill="#e4b34a"/><rect x="18" y="27" width="7.500" height="17.500" rx="3.700" fill="#d32d58"/><path d="M16 27v4a4 4 0 1 1-4-4z" fill="#d32d58"/></svg></div>
<div class="slot"><svg width="52" height="52" viewBox="0 0 52 52"><rect width="52" height="52" rx="12" fill="#fff"/><path d="M8 32.500l3 2.500L35 15V8z" fill="#2765aa"/><path d="M8 19.500l3-2.500L35 37v7z" fill="#2f77c6"/><path d="M34.500 8L43.500 12v28L34.500 44.500z" fill="#4a9bea"/></svg></div>
<div class="slot"><svg width="52" height="52" viewBox="0 0 52 52"><rect width="52" height="52" rx="12" fill="#071d31"/><text x="26.500" y="36" text-anchor="middle" font-family="Open Sans" font-weight="700" font-size="30" textLength="33" lengthAdjust="spacingAndGlyphs" fill="#5aa8f8">Ps</text></svg></div>
<div class="slot"><svg width="52" height="52" viewBox="0 0 52 52"><rect width="52" height="52" rx="12" fill="#2e0500"/><text x="26" y="36" text-anchor="middle" font-family="Open Sans" font-weight="700" font-size="30" textLength="30" lengthAdjust="spacingAndGlyphs" fill="#f3a13c">Ai</text></svg></div>
<div class="slot run"><svg width="64" height="64" viewBox="0 0 64 64"><rect y="1" width="64" height="62" rx="9" fill="#f3f3f2"/><circle cx="32" cy="32" r="26.500" fill="#122026"/><path d="M12 20l7 6-3 9M42 12l3 6 8 3M20 47l5 5" fill="none" stroke="#07090b" stroke-width="1.500"/><path d="M23.500 15h5v29l-2.500 6-2.500-6z" fill="url(#steel)"/><path d="M19.500 16.500h13" stroke="#8a4f2e" stroke-width="3"/><path d="M26 8.500v9" stroke="#9a5a33" stroke-width="3"/><path d="M31 18c8-2 12 2 10 7.500-1 4-5 6-8 7 5 3 8 11 18 13" fill="none" stroke="url(#steel)" stroke-width="4.200"/></svg></div>
<div class="slot run"><svg width="54" height="54" viewBox="0 0 54 54"><rect x="1" y="1" width="52" height="52" rx="12" fill="#edf0f5"/><rect x="5" y="5" width="44" height="44" rx="8" fill="url(#sky)"/><path d="M5 29h44v12a8 8 0 0 1-8 8H13a8 8 0 0 1-8-8z" fill="#335a92"/><path d="M5 37c5-3 10 1 18-1l4 13H13a8 8 0 0 1-8-8z" fill="#d5dde6"/><path d="M8 42l8-2 6 4-5 5z" fill="#8a735f"/><path d="M28 36h22l4 15c0 3-3 4-15 4s-15-1-15-4z" fill="#cfd1d2" stroke="#67696b"/><path d="M30 43l6 3 5-3 6 5-8 3-10-2z" fill="#494b4d" opacity=".55"/><rect x="27" y="27" width="24" height="10" rx="3" fill="#1e1f20"/><ellipse cx="39" cy="28" rx="12" ry="2.500" fill="#4b4c4e"/></svg></div>
<div class="sep"><i></i></div>
<div class="slot"><svg width="54" height="44" viewBox="0 0 54 44"><path d="M6 0h42v3H6z" fill="#fff"/><path d="M3 3h48v3H3z" fill="#fff"/><path d="M6 2.500h42M4 5.500h46" stroke="#222" stroke-width="1"/><rect y="7" width="54" height="36" fill="#fff"/><rect x="2.500" y="8" width="49" height="5" fill="#24222c"/><rect x="2.500" y="38.500" width="49" height="1.500" fill="#1b2440"/><path d="M4 16h12M24 16h14M17 18.500h22" stroke="#777" stroke-width=".8"/><path d="M14 21l4 1 4-1 4 3-2 4-2-1v9h-8v-9l-2 1-2-4z" fill="#2436a0"/><path d="M40 24h11M40 28h5M36 32h14" stroke="#3fa0b4" stroke-width="1.400"/></svg></div>
<div class="slot"><svg width="60" height="54" viewBox="0 0 60 54"><rect width="60" height="50" fill="#10181d"/><rect width="25" height="50" fill="#16222a"/><path d="M25 0h35v3H25z" fill="#2b343b"/><path d="M1 16h23v4H1z" fill="#27353d"/><g fill="#b08468"><circle cx="3" cy="8" r="1.500"/><circle cx="3" cy="13" r="1.500"/><circle cx="3" cy="18" r="1.500"/><circle cx="3" cy="25" r="1.500"/><circle cx="3" cy="31" r="1.500"/><circle cx="3" cy="37" r="1.500"/><circle cx="3" cy="44" r="1.500"/></g><path d="M6 8h9M6 13h12M6 18h8M6 25h12M6 31h7M6 37h10M6 44h8" stroke="#5f6e76"/><path d="M27 3h14v13H27zM27 18h14v20H27z" fill="#f2f2f2"/><path d="M29 6h9M29 9h6M29 12h8M29 22h8M29 27h9M29 32h6" stroke="#999" stroke-width=".8"/><svg x="39" y="34" width="20" height="20"><use href="#wa"/></svg></svg></div>
<div class="slot"><svg width="60" height="50" viewBox="0 0 60 50"><rect width="60" height="42" rx="1" fill="#22242b"/><rect width="9" height="42" fill="#3a3b42"/><rect width="60" height="4" fill="#3b3c43"/><path d="M2 7h4M2 10h5M2 13h4M2 18h5M2 22h4M2 27h5" stroke="#888" stroke-width=".8"/><g fill="#f2f2f2"><rect x="11" y="5" width="4" height="3"/><rect x="18" y="5" width="4" height="3"/><rect x="38" y="5" width="4" height="3"/><rect x="17" y="13" width="4" height="3"/><rect x="31" y="13" width="4" height="3"/><rect x="24" y="21" width="4" height="3"/></g><rect x="17" y="9" width="5" height="2" fill="#2a78e0"/><rect x="45" y="10" width="14" height="7" fill="#b5dcf0"/><svg x="39" y="30" width="20" height="20"><use href="#finder"/></svg></svg></div>
<div class="slot"><svg width="46" height="60" viewBox="0 0 46 60"><path d="M3 6L12 1l8 3 8-3 9 2 6 6-4 6H6z" fill="#dedcda"/><path d="M8 4l7 3-2 5zM26 3l8 2-6 6z" fill="#4b423d"/><path d="M16 6l6 1-3 5z" fill="#3f9ab8"/><path d="M32 5l6 3-5 3z" fill="#c4683f"/><path d="M1 8c6 7 38 7 44 0l-6 48c-3 5-29 5-32 0z" fill="url(#tr)"/><path d="M1 8c6 7 38 7 44 0" fill="none" stroke="#b9bbbd" stroke-width="1.400"/></svg></div>
</div>
<script src="https://cdn.jsdelivr.net/npm/bootstrap@5.3.0/dist/js/bootstrap.bundle.min.js"></script>
</body>
</html>
